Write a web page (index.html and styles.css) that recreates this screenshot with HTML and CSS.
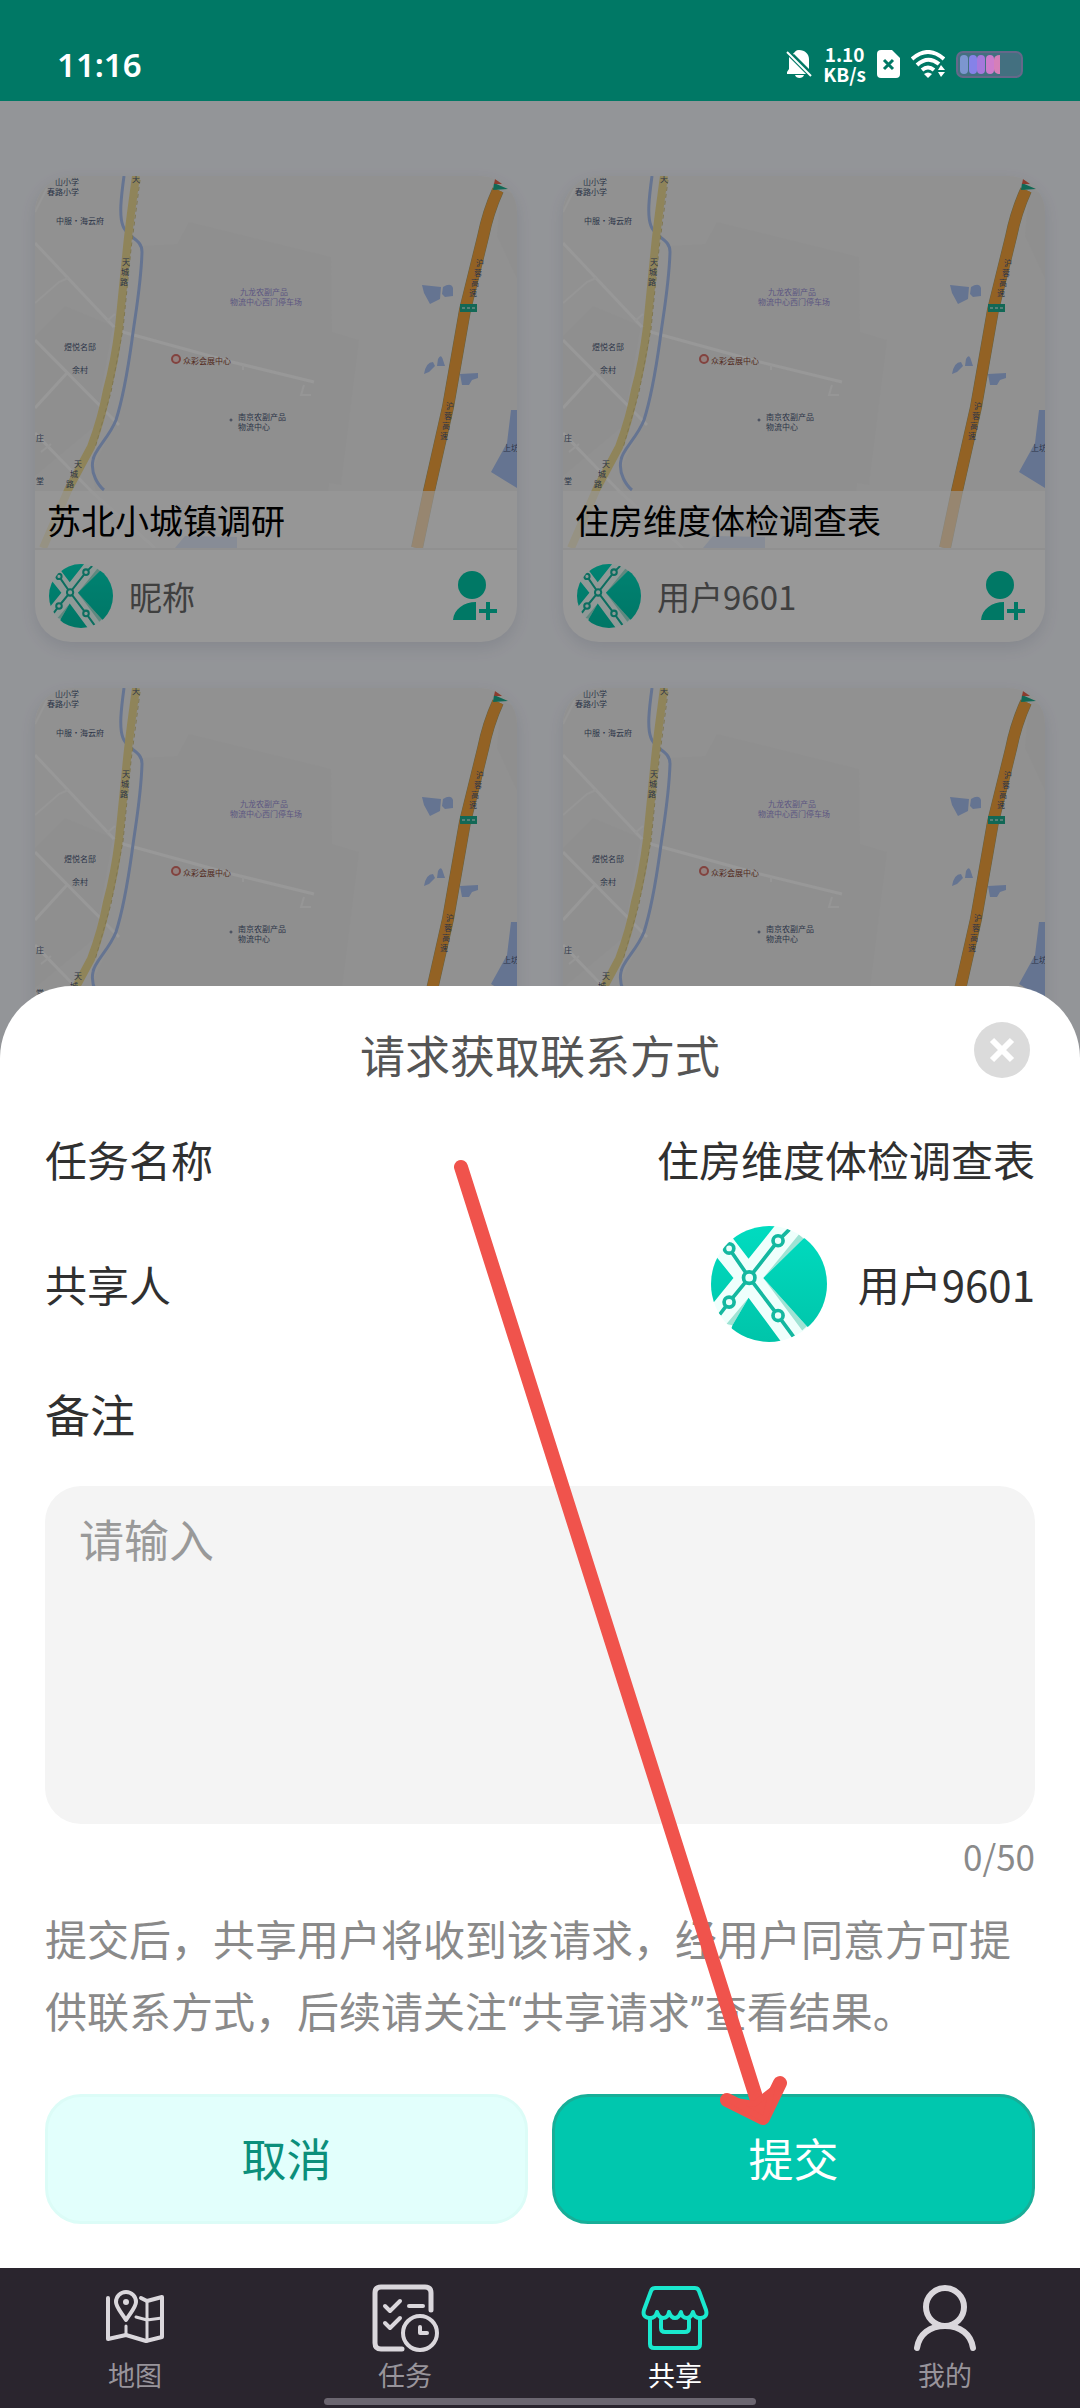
FILE: index.html
```
<!DOCTYPE html>
<html lang="zh-CN">
<head>
    <meta charset="UTF-8">
    <meta name="viewport" content="width=device-width, initial-scale=1.0">
    <title>共享</title>
    <link rel="stylesheet" href="styles.css">
</head>

<body>

<!-- 公用图形 -->
<svg class="defs" width="0" height="0" aria-hidden="true">
    <defs>
        <linearGradient id="teal" x1="0" y1="0" x2="0" y2="1">
            <stop offset="0" stop-color="#00dcc0"/>
            <stop offset="1" stop-color="#00c3a8"/>
        </linearGradient>
        <clipPath id="round"><circle cx="173" cy="173" r="173"/></clipPath>
    </defs>

    <symbol id="avatar" viewBox="0 0 346 346">
        <g clip-path="url(#round)">
            <rect width="346" height="346" fill="#effffc"/>
            <path fill="#9fe3d4" d="M156 155 262 25 276 37ZM156 155 272 312 286 299ZM112 214 46 292 64 296Z"/>
            <path fill="url(#teal)" d="M68 40 40-5H194L112 98ZM16 92 67 155 9 227-20 240V80ZM112 214 207 342 220 370H40L64 296ZM156 155 276 37 360 0V360L286 299Z"/>
            <g fill="none" stroke="#14b8a0" stroke-width="11">
                <path d="M234 10 200 44 114 154 54 227 26 264M54 67 114 154 200 267 246 330"/>
                <g fill="#e9fffb">
                    <circle cx="54" cy="67" r="14"/>
                    <circle cx="200" cy="44" r="15"/>
                    <circle cx="114" cy="154" r="17"/>
                    <circle cx="54" cy="227" r="15"/>
                    <circle cx="200" cy="267" r="15"/>
                </g>
            </g>
        </g>
    </symbol>

    <symbol id="user-add" viewBox="0 0 44 50">
        <circle cx="19" cy="14" r="14"/>
        <path d="M23 31V49H0C1 38 11 31 23 31ZM33 31H37V38H44V42H37V49H33V42H26V38H33Z"/>
    </symbol>

    <symbol id="map" viewBox="0 0 482 372">
        <rect width="482" height="372" fill="#f2f2f2"/>
        <path fill="#efefef" d="M154 46 296 81 297 156 324 164 306 309 294 307 290 372H70L57 294 81 244 97 164 107 70 142 68ZM0 160 30 130 78 150 60 250 0 300ZM462 60 482 103V20L466 12Z"/>
        <path fill="none" stroke="#fdfdfd" stroke-width="3" d="M0 67 79 151M0 164 84 249M0 232 32 197M84 155 197 186 279 206M0 257 57 316 120 372"/>
        <path fill="none" stroke="#fafafa" stroke-width="2" d="M0 127 24 106 33 102M269 209 266 219 276 219M0 36 12 12M72 145 80 138M6 276 16 268M208 189V194"/>
        <path fill="none" stroke="#a9c1f2" stroke-width="3" d="M89 0C86 22 84 40 88 50 92 62 107 62 107 76 106 110 100 140 97 164 92 200 88 222 81 244 74 262 59 274 58 284 55 298 64 310 69 314"/>
        <path fill="#a9c1f2" d="M387 109 406 111 405 123 395 128 389 117ZM408 111Q416 106 418 112V120L410 121 407 118ZM389 198Q391 186 398 186L400 190 394 196ZM403 183Q406 177 408 184L410 190H402ZM425 198 443 197V202L437 204 434 209H427ZM476 234H482V312L456 296 472 267ZM150 360 202 361V372H140Z"/>
        <path fill="none" stroke="#efdc96" stroke-width="8" d="M101 0C97 30 94 50 92 71L84 151C81 175 77 196 72 214 68 236 62 255 56 271L34 312 8 372"/>
        <path fill="none" stroke="#d5c684" stroke-width="1" stroke-dasharray="4 3" d="M105 4 96 73 88 153 76 216 60 272"/>
        <path fill="none" stroke="#a9a070" stroke-width="12" d="M463 14Q453 36 448 61L430 134 413 231 394 315 382 372"/>
        <path fill="none" stroke="#f6a43c" stroke-width="11" d="M463 14Q453 36 448 61L430 134 413 231 394 315 382 372"/>
        <path fill="#1fae90" d="M425 128H442V136H425ZM459 7 473 13 458 14Z"/>
        <path fill="#e8654e" d="M460 3 467 8 459 8Z"/>
        <path stroke="#fff" stroke-dasharray="3 2" d="M427 132H440"/>
        <circle cx="141" cy="183" r="4" fill="#f6d8d4" stroke="#d9706a" stroke-width="2"/>
        <circle cx="196" cy="244" r="1" fill="none" stroke="#5d6b8c"/>
        <g class="map-label">
            <text x="20" y="9">山小学</text>
            <text x="12" y="19">春路小学</text>
            <text x="21" y="48">中服·海云府</text>
            <text x="29" y="174">煜悦名邸</text>
            <text x="37" y="197">余村</text>
            <text x="148" y="188" fill="#8a4632">众彩会展中心</text>
            <text x="203" y="244">南京农副产品</text>
            <text x="203" y="254">物流中心</text>
            <text x="205" y="119" fill="#9a90d8">九龙农副产品</text>
            <text x="195" y="129" fill="#9a90d8">物流中心西门停车场</text>
            <text x="97" y="6">天</text>
            <text x="87" y="89">天</text>
            <text x="86" y="99">城</text>
            <text x="85" y="109">路</text>
            <text x="39" y="291">天</text>
            <text x="35" y="301">城</text>
            <text x="31" y="311">路</text>
            <text x="1" y="265">庄</text>
            <text x="1" y="308">堂</text>
            <text x="468" y="275">上坊</text>
            <text x="441" y="90">沪</text>
            <text x="439" y="100">蓉</text>
            <text x="436" y="110">高</text>
            <text x="434" y="120">速</text>
            <text x="411" y="233">沪</text>
            <text x="409" y="243">蓉</text>
            <text x="407" y="253">高</text>
            <text x="405" y="263">速</text>
        </g>
    </symbol>
</svg>

<div class="app">

    <header class="status-bar">
        <span class="status-time">11:16</span>
        <div class="status-icons">
            <svg width="26" height="28" viewBox="0 0 26 28" fill="#fff">
                <path d="M7 5C8 2 10 0 13 0 19 0 23 4 23 9V19L7 3ZM3 7 20 24H1V22L3 19ZM9 25H18C17 29 10 29 9 25Z"/>
                <path fill="none" stroke="#fff" stroke-width="2" d="M1 2 25 26"/>
            </svg>
            <span class="status-speed">1.10<br>KB/s</span>
            <svg width="23" height="28" viewBox="0 0 23 28">
                <path fill="#fff" d="M4 0H15L23 8V24Q23 28 19 28H4Q0 28 0 24V4Q0 0 4 0Z"/>
                <path stroke="#007865" stroke-width="3" d="M7 10 16 19M16 10 7 19"/>
            </svg>
            <svg width="34" height="28" viewBox="0 0 34 28" fill="none" stroke="#fff" stroke-width="4">
                <path d="M1 9Q17-5 33 9M6 15Q17 5 28 14M11 20Q17 15 23 20"/>
                <path fill="#fff" stroke="none" d="M13 24Q17 21 21 24L17 28ZM30 15 34 20H27ZM27 22H34L30 27Z"/>
            </svg>
            <svg width="67" height="27" viewBox="0 0 67 27">
                <rect x="1" y="1" width="65" height="25" rx="6" fill="#437080" stroke="#65688a" stroke-width="2"/>
                <rect x="4" y="4" width="8" height="19" rx="4" fill="#7c96cf"/>
                <rect x="13" y="4" width="8" height="19" rx="4" fill="#8582e8"/>
                <rect x="21" y="4" width="8" height="19" rx="4" fill="#a578dc"/>
                <rect x="30" y="4" width="8" height="19" rx="4" fill="#cd7ccc"/>
                <path fill="#d67fb8" d="M44 4V23H42Q38 22 38 18V9Q38 4 44 4Z"/>
            </svg>
        </div>
    </header>

    <main class="content">
        <!-- 共享任务列表 -->
        <div class="card-grid">
            <article class="card">
                <div class="card-map">
                    <svg viewBox="0 0 482 372"><use href="#map"/></svg>
                    <h3 class="card-title">苏北小城镇调研</h3>
                </div>
                <div class="card-footer">
                    <svg class="card-avatar"><use href="#avatar"/></svg>
                    <span class="card-user">昵称</span>
                    <button class="add-btn" type="button" aria-label="添加"><svg width="44" height="50"><use href="#user-add"/></svg></button>
                </div>
            </article>
            <article class="card">
                <div class="card-map">
                    <svg viewBox="0 0 482 372"><use href="#map"/></svg>
                    <h3 class="card-title">住房维度体检调查表</h3>
                </div>
                <div class="card-footer">
                    <svg class="card-avatar"><use href="#avatar"/></svg>
                    <span class="card-user">用户9601</span>
                    <button class="add-btn" type="button" aria-label="添加"><svg width="44" height="50"><use href="#user-add"/></svg></button>
                </div>
            </article>
            <article class="card">
                <div class="card-map"><svg viewBox="0 0 482 372"><use href="#map"/></svg></div>
            </article>
            <article class="card">
                <div class="card-map"><svg viewBox="0 0 482 372"><use href="#map"/></svg></div>
            </article>
        </div>

        <div class="mask"></div>

        <!-- 请求弹窗 -->
        <form class="sheet">
            <div class="sheet-header">
                <h2>请求获取联系方式</h2>
                <button class="close-btn" type="button" aria-label="关闭">
                    <svg width="56" height="56" viewBox="0 0 56 56">
                        <circle cx="28" cy="28" r="28" fill="#dbdbdb"/>
                        <path stroke="#fff" stroke-width="6" d="M18 18 38 38M38 18 18 38"/>
                    </svg>
                </button>
            </div>

            <div class="sheet-body">
                <div class="row">
                    <span>任务名称</span>
                    <span>住房维度体检调查表</span>
                </div>
                <div class="row">
                    <span>共享人</span>
                    <span class="sharer">
                        <svg class="sharer-avatar"><use href="#avatar"/></svg>
                        用户9601
                    </span>
                </div>
                <label class="remark-label" for="remark">备注</label>
                <textarea id="remark" maxlength="50" placeholder="请输入"></textarea>
            </div>

            <div class="counter">0/50</div>
            <p class="note">提交后，共享用户将收到该请求，经用户同意方可提供联系方式，后续请关注“共享请求”查看结果。</p>

            <div class="actions">
                <button class="btn btn-cancel" type="button">取消</button>
                <button class="btn btn-submit" type="submit">提交</button>
            </div>

            <!-- 指引箭头 -->
            <svg class="guide-arrow" viewBox="0 0 1080 1282" fill="none" stroke="#f0534c" stroke-width="14" stroke-linecap="round" stroke-linejoin="round">
                <path d="M461 181 762 1130M727 1114 763 1132 780 1097"/>
                <path fill="#f0534c" stroke-width="6" d="M730 1114 754 1118 772 1104 765 1134Z"/>
            </svg>
        </form>
    </main>

    <nav class="tab-bar">
        <a href="#">
            <svg width="68" height="68" viewBox="0 0 68 68" fill="none" stroke="#dad7dc" stroke-width="4" stroke-linecap="round" stroke-linejoin="round">
                <path d="M7 14V55L25 51 45 57 61 53V13L46 17 40 14"/>
                <path stroke-width="3" d="M46 17V57M25 51V42M35 33 46 36 61 34"/>
                <path d="M25 36C20 28 15 23 15 18A10 10 0 0 1 35 18C35 23 30 28 25 36Z"/>
                <circle cx="25" cy="18" r="3" fill="#dad7dc" stroke="none"/>
            </svg>
            <span>地图</span>
        </a>
        <a href="#">
            <svg width="68" height="68" viewBox="0 0 68 68" fill="none" stroke="#dad7dc" stroke-width="4" stroke-linecap="round" stroke-linejoin="round">
                <path stroke-width="5" d="M60 26V9Q60 3 54 3H10Q4 3 4 9V59Q4 65 10 65H31"/>
                <path d="M14 22 19 27 29 17M14 39 19 44 29 34M38 22H52"/>
                <circle cx="49" cy="49" r="17"/>
                <path d="M49 43V49H56"/>
            </svg>
            <span>任务</span>
        </a>
        <a href="#" class="active">
            <svg width="68" height="68" viewBox="0 0 68 68" fill="none" stroke="#1ae8ce" stroke-width="4" stroke-linecap="round" stroke-linejoin="round">
                <path d="M14 4H54Q57 4 58 7L65 26Q67 33 60 34 54 35 52 28 50 34 46 34 41 34 40 28 38 34 34 34 30 34 28 28 27 34 22 34 18 34 16 28 14 35 8 34 1 33 3 26L10 7Q11 4 14 4Z"/>
                <path d="M9 36V60Q9 64 13 64H55Q59 64 59 60V36M20 36V44Q20 48 24 48H44Q48 48 48 44V36"/>
            </svg>
            <span>共享</span>
        </a>
        <a href="#">
            <svg width="68" height="68" viewBox="0 0 68 68" fill="none" stroke="#dad7dc" stroke-width="6" stroke-linecap="round">
                <circle cx="34" cy="23" r="19"/>
                <path d="M6 64C8 50 19 42 34 42S60 50 62 64"/>
            </svg>
            <span>我的</span>
        </a>
        <div class="home-indicator"></div>
    </nav>

</div>

</body>
</html>
```

FILE: styles.css
```
* {
    box-sizing: border-box;
}

body {
    margin: 0;
    font-family: "Noto Sans CJK SC", "Noto Sans", sans-serif;
    color: #303030;
    background-color: #f6f8fe;
}

h2, h3, p {
    margin: 0;
    font-weight: normal;
}

button {
    padding: 0;
    border: none;
    background: none;
    font-family: inherit;
}

svg {
    display: block;
    flex-shrink: 0;
}

.defs {
    position: absolute;
}

.app {
    display: flex;
    flex-direction: column;
    height: 100vh;
}

/* 状态栏 */
.status-bar {
    display: flex;
    justify-content: space-between;
    align-items: center;
    height: 101px;
    padding: 27px 57px 0;
    background-color: #007865;
    color: white;
    font-family: "Noto Sans", sans-serif;
    font-weight: 600;
}

.status-time {
    font-size: 33px;
}

.status-icons {
    display: flex;
    align-items: center;
    gap: 11px;
}

.status-speed {
    font-family: "Noto Sans CJK SC", sans-serif;
    font-size: 19px;
    font-weight: 700;
    line-height: 20px;
    text-align: center;
}

/* 列表 */
.content {
    position: relative;
    flex: 1;
    overflow: hidden;
}

.card-grid {
    display: grid;
    grid-template-columns: 1fr 1fr;
    gap: 46px;
    padding: 75px 35px;
}

.card {
    border-radius: 36px;
    background-color: #fdfdfd;
    box-shadow: 0 6px 16px rgba(60, 70, 110, 0.12);
    overflow: hidden;
}

.card-map {
    position: relative;
}

.card-map svg {
    width: 100%;
}

.map-label {
    font-size: 8px;
    fill: #4a5878;
}

.card-title {
    position: absolute;
    left: 0;
    right: 0;
    bottom: 0;
    padding: 0 12px;
    background-color: rgba(255, 255, 255, 0.65);
    color: black;
    font-size: 34px;
    line-height: 57px;
}

.card-footer {
    display: flex;
    align-items: center;
    gap: 16px;
    height: 94px;
    padding: 0 20px 0 14px;
    border-top: 2px solid #f0f0f0;
}

.card-avatar {
    width: 64px;
    height: 64px;
}

.card-user {
    flex: 1;
    color: #6a6a6a;
    font-size: 33px;
}

.add-btn {
    fill: #00c8a8;
}

.mask {
    position: absolute;
    inset: 0;
    background-color: rgba(0, 0, 0, 0.4);
}

/* 弹窗 */
.sheet {
    position: absolute;
    left: 0;
    right: 0;
    bottom: 0;
    padding: 36px 45px 44px;
    border-radius: 72px 72px 0 0;
    background-color: white;
}

.sheet-header {
    display: grid;
    grid-template-columns: 1fr auto 1fr;
    align-items: start;
    margin-bottom: 28px;
}

.sheet-header h2 {
    grid-column: 2;
    color: #555;
    font-size: 45px;
    line-height: 66px;
}

.close-btn {
    justify-self: end;
    margin-right: 5px;
}

.sheet-body {
    display: flex;
    flex-direction: column;
    gap: 24px;
}

.row {
    display: flex;
    justify-content: space-between;
    align-items: center;
    min-height: 86px;
    font-size: 42px;
    line-height: 60px;
}

.sharer {
    display: flex;
    align-items: center;
    gap: 31px;
}

.sharer-avatar {
    width: 116px;
    height: 116px;
}

.remark-label {
    font-size: 45px;
    line-height: 96px;
}

textarea {
    width: 100%;
    height: 338px;
    padding: 20px 34px;
    border: none;
    border-radius: 36px;
    background-color: #f4f4f4;
    color: #303030;
    font-family: inherit;
    font-size: 45px;
    line-height: 66px;
    resize: none;
}

textarea::placeholder {
    color: #999;
}

.counter {
    margin-bottom: 18px;
    color: #8a8a8a;
    font-size: 35px;
    line-height: 64px;
    text-align: right;
}

.note {
    color: #8a8a8a;
    font-family: Roboto, "Noto Sans CJK SC", sans-serif;
    font-size: 42px;
    line-height: 72px;
}

.actions {
    display: flex;
    gap: 24px;
    margin-top: 44px;
}

.btn {
    flex: 1;
    height: 130px;
    padding-bottom: 4px;
    border-radius: 36px;
    font-size: 45px;
}

.btn-cancel {
    border: 3px solid #dcfcf7;
    background-color: #e2fffc;
    color: #0c8f7b;
}

.btn-submit {
    border: 3px solid #17ae98;
    background-color: #00c7ae;
    color: white;
}

.guide-arrow {
    position: absolute;
    inset: 0;
    width: 100%;
    height: 100%;
    pointer-events: none;
}

/* 底部导航 */
.tab-bar {
    position: relative;
    display: flex;
    height: 140px;
    background-color: #2a252e;
}

.tab-bar a {
    flex: 1;
    display: flex;
    flex-direction: column;
    align-items: center;
    gap: 4px;
    padding-top: 16px;
    color: #98949b;
    font-size: 27px;
    line-height: 38px;
    text-decoration: none;
}

.tab-bar a.active {
    color: white;
}

.home-indicator {
    position: absolute;
    left: 30%;
    right: 30%;
    bottom: 3px;
    height: 7px;
    border-radius: 4px;
    background-color: #6b6670;
}
```
